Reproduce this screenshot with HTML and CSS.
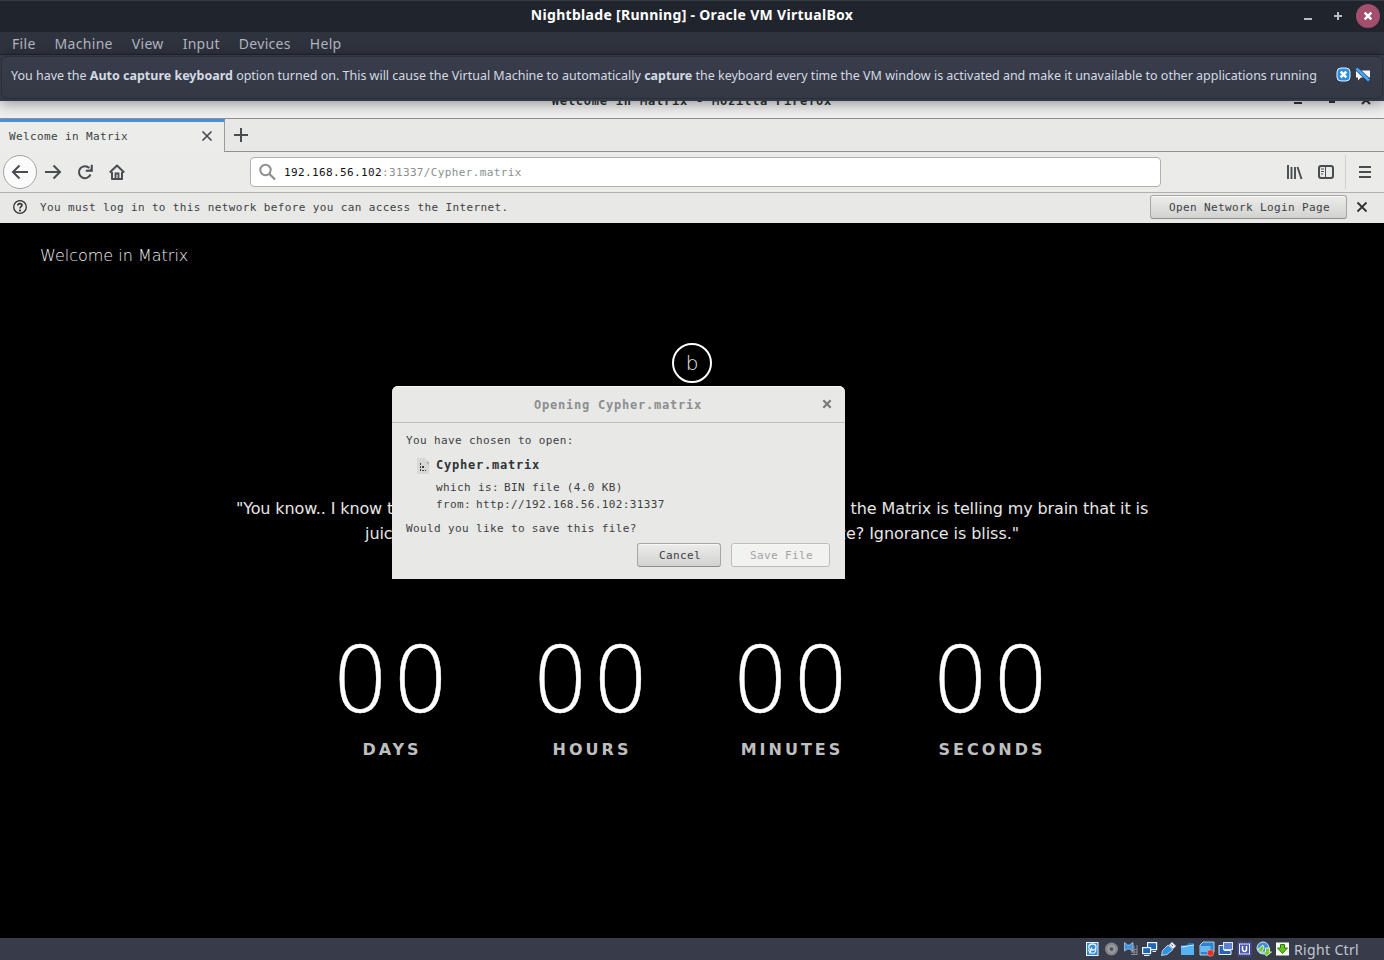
FILE: index.html
```html
<!DOCTYPE html>
<html lang="en">
<head>
<meta charset="utf-8">
<title>Nightblade [Running] - Oracle VM VirtualBox</title>
<link rel="stylesheet" href="styles.css">
</head>
<body>
<header class="vm-title">
  <h1 class="vm-name">Nightblade [Running] - Oracle VM VirtualBox</h1>
  <svg class="vm-controls" width="86" height="32" viewBox="0 0 86 32">
    <path d="M6 19h8M36 16h8M40 12v8" stroke="#b9bcc2" stroke-width="2" fill="none"/>
    <circle cx="70" cy="16" r="12" fill="#a44e6e"/>
    <path d="M66.700 12.700l6.600 6.600M73.300 12.700l-6.600 6.600" stroke="#fff" stroke-width="2.500"/>
  </svg>
</header>
<nav class="menu">
  <span>File</span><span>Machine</span><span>View</span><span>Input</span><span>Devices</span><span>Help</span>
</nav>
<section class="notice">
  <div class="notice-box">
    <p class="notice-text">You have the <b>Auto capture keyboard</b> option turned on. This will cause the Virtual Machine to automatically <b>capture</b> the keyboard every time the VM window is activated and make it unavailable to other applications running</p>
    <svg class="notice-icons" width="36" height="16" viewBox="0 0 36 16">
      <rect x="1" y="1" width="13" height="13" rx="4" fill="#2b8fe6" stroke="#e6f4ff"/>
      <path d="M4.700 4.700l5.600 5.600M10.300 4.700l-5.600 5.600" stroke="#fff" stroke-width="2.600"/>
      <path d="M20 3.500h14v7h-2v3l-3-3h-4l-3 3v-3h-2z" fill="#f5f5f5"/>
      <path d="M20.500 1.500L33 13.500" stroke="#173e6e" stroke-width="4"/>
      <path d="M20.500 1.500L33 13.500" stroke="#4aa6f2" stroke-width="2.600"/>
    </svg>
  </div>
</section>
<main class="guest">
  <div class="ff-title">
    <span class="ff-name">Welcome in Matrix - Mozilla Firefox</span>
    <svg width="84" height="17" viewBox="0 0 84 17"><path d="M4 2h8M39 1h6" stroke="#2e3436" stroke-width="2"/><path d="M72 3l4-4 4 4" stroke="#2e3436" stroke-width="2" fill="none"/></svg>
  </div>
  <div class="tabs">
    <div class="tab"><span>Welcome in Matrix</span><svg width="12" height="12" viewBox="0 0 12 12"><path d="M1.500 1.500l9 9M10.500 1.500l-9 9" stroke="#474d50" stroke-width="1.700"/></svg></div>
    <div class="tab-new"><svg width="14" height="14" viewBox="0 0 14 14"><path d="M7 0v14M0 7h14" stroke="#474d50" stroke-width="2"/></svg></div>
  </div>
  <div class="toolbar">
    <div class="back"><svg width="18" height="16" viewBox="0 0 18 16"><path d="M17 8H2M8.500 1.500L2 8l6.500 6.500" class="ico"/></svg></div>
    <svg class="fwd" width="18" height="16" viewBox="0 0 18 16"><path d="M1 8h15M9.500 1.500L16 8l-6.500 6.500" class="ico"/></svg>
    <svg class="reload" width="16" height="16" viewBox="0 0 16 16"><path d="M13.500 10.500A6 6 0 1 1 12.300 4" class="ico"/><path d="M15.500 1v6.500H9v-1.500h3.500L14 4.500V1z" fill="#474d50" stroke="#474d50" stroke-width=".6"/></svg>
    <svg class="home" width="16" height="16" viewBox="0 0 16 16"><path d="M.8 8.500L8 1.500l7.200 7M3 8v7h10V8" class="ico" stroke-linejoin="round"/><path d="M6.500 15V9.500h3V15" stroke="#474d50" stroke-width="1.800" fill="none"/></svg>
    <div class="url"><svg width="18" height="18" viewBox="0 0 18 18"><circle cx="6.500" cy="7" r="5.200" fill="none" stroke="#8c8f90" stroke-width="2"/><path d="M10.200 10.700l5.800 5.800" stroke="#8c8f90" stroke-width="2.300"/></svg><span class="url-text"><em>192.168.56.102</em>:31337/Cypher.matrix</span></div>
    <svg class="lib" width="16" height="16" viewBox="0 0 16 16"><path d="M1 1v14M4.500 3v12M8 3v12M10.500 3l4 12" stroke="#474d50" stroke-width="1.900" fill="none"/></svg>
    <svg class="side" width="16" height="14" viewBox="0 0 16 14"><rect x="1" y="1" width="14" height="12" rx="2" class="ico"/><path d="M7.500 1v12M3 4h3M3 6.500h3M3 9h2" stroke="#474d50" stroke-width="1" fill="none"/></svg>
    <div class="hamb"><svg width="12" height="12" viewBox="0 0 12 12"><path d="M0 1h12M0 6h12M0 11h12" stroke="#474d50" stroke-width="2"/></svg></div>
  </div>
  <div class="portal">
    <svg width="14" height="14" viewBox="0 0 14 14"><circle cx="7" cy="7" r="6.300" fill="none" stroke="#2e3436" stroke-width="1.300"/><path d="M4.900 5.500C4.900 3 9 3 9 5.300 9 6.700 7 6.700 7 8.500" fill="none" stroke="#2e3436" stroke-width="1.600"/><circle cx="7" cy="10.500" r="1.100" fill="#2e3436"/></svg>
    <span class="portal-text">You must log in to this network before you can access the Internet.</span>
    <button class="btn login">Open Network Login Page</button>
    <svg width="12" height="12" viewBox="0 0 12 12"><path d="M1.500 1.500l9 9M10.500 1.500l-9 9" stroke="#2e3436" stroke-width="1.800"/></svg>
  </div>
  <div class="page">
    <div class="brand">Welcome in Matrix</div>
    <div class="badge">b</div>
    <p class="quote"><span class="line-a">"You know.. I know this steak doesn't exist. I know when I put it in my mouth; the Matrix is telling my brain that it is</span><br><span class="line-b">juicy, and delicious. After nine years.. you know what I realize? Ignorance is bliss."</span></p>
    <div class="count">
      <div class="unit"><span class="num">00</span><span class="lab">DAYS</span></div>
      <div class="unit"><span class="num">00</span><span class="lab">HOURS</span></div>
      <div class="unit"><span class="num">00</span><span class="lab">MINUTES</span></div>
      <div class="unit"><span class="num">00</span><span class="lab">SECONDS</span></div>
    </div>
    <section class="dialog">
      <div class="dlg-head"><h2>Opening Cypher.matrix</h2><svg width="10" height="10" viewBox="0 0 10 10"><path d="M1.300 1.300l7.400 7.400M8.700 1.300L1.300 8.700" stroke="#777b7c" stroke-width="2.200"/></svg></div>
      <div class="dlg-body">
        <p>You have chosen to open:</p>
        <div class="file"><svg width="12" height="16" viewBox="0 0 12 16"><path d="M0 0h8l4 4v12H0z" fill="#d8d8d7"/><path d="M9 4h3v3z" fill="#a9abab"/><path d="M3 5h1v2H3zM3 8h1v2H3zM3 11h1v2H3zM5 8h2v2H5zM5 12h2v1H5zM8 12h1v1H8z" fill="#3a3f41"/></svg><b>Cypher.matrix</b></div>
        <p class="meta"><span>which is:</span><span>BIN file (4.0 KB)</span></p>
        <p class="meta"><span>from:</span><span>http://192.168.56.102:31337</span></p>
        <p class="ask">Would you like to save this file?</p>
        <div class="actions"><button class="btn cancel">Cancel</button><button class="btn save" disabled>Save File</button></div>
      </div>
    </section>
  </div>
</main>
<footer class="status">
  <svg width="206" height="16" viewBox="0 0 206 16">
    <g><rect x="1.500" y="1.500" width="11.500" height="13" fill="#2f8ad8" stroke="#e8f4ff"/><ellipse cx="7.400" cy="6" rx="3.600" ry="3" fill="none" stroke="#e8f4ff" stroke-width="1.300"/><path d="M3.500 8.500c1 5 7 5 7.500 0M7 6.500l-2.500 6" stroke="#fff" stroke-width="1.100" fill="none"/></g>
    <g><circle cx="26.500" cy="8" r="6.500" fill="#85878c"/><circle cx="26.500" cy="8" r="3.500" fill="none" stroke="#a8aaad"/><circle cx="26.500" cy="8" r="1.600" fill="#4a4d55"/></g>
    <g><path d="M39.500 1.500l3 2.500h2l3.500-2.500v9L44.500 8h-2l-3 2z" fill="#3f93de" stroke="#b8dcfa" stroke-width=".7"/><path d="M46 8.500h6M46 11h6M46 13.500h6M49 5v9M52 4v10" stroke="#8a8f98" stroke-width="1"/></g>
    <g fill="#1c66b5" stroke="#e8f4ff" stroke-width="1.200"><rect x="62.600" y="1.600" width="9" height="7"/><rect x="57.600" y="6.600" width="8" height="6"/><path d="M59 14.500h5.500M67.500 10.500h3.500"/></g>
    <g><path d="M76.500 14.500l1-5L83 4l5 4.500-6 5z" fill="#2f91e4" stroke="#d8edff" stroke-width=".8"/><path d="M84 4l3-3 4 4-3 3z" fill="#f2f2f2"/><path d="M86.500 3.500l1.500 1.500" stroke="#556"/></g>
    <g><path d="M96 4h6l1-2h6v12H96z" fill="#1d76c9"/><path d="M96 6l13-1v9H96z" fill="#55b5f4"/><path d="M96 6l13-2" stroke="#e8f6ff"/></g>
    <g><path d="M115 4l3-3h11v10l-3 3h-11z" fill="#2e83d0" stroke="#d6ebff" stroke-width=".8"/><path d="M115.500 5h10v6h-10z" fill="#67baf0"/><circle cx="125.500" cy="12" r="3.300" fill="#df2f20" stroke="#f4c1b8" stroke-width=".5"/></g>
    <g><path d="M134 4.500h5v5h7v4h-12z" fill="#2862ba" stroke="#eff6ff"/><rect x="138.500" y="1.500" width="9" height="7" fill="#5f83d2" stroke="#d8e6ff"/></g>
    <g><rect x="153" y="1.500" width="13" height="13" fill="none" stroke="#4450b0" stroke-width="2" stroke-dasharray="1 1"/><rect x="154.500" y="3" width="10" height="10" fill="#4957b8" stroke="#e6e9ff"/><path d="M157.500 5v4q2 3 4 0V5" fill="none" stroke="#fff" stroke-width="1.500"/></g>
    <g><circle cx="178" cy="7" r="6" fill="#3c8ede" stroke="#d5eaff"/><path d="M173 8l5-4 1 3-3 5zM181.500 15l-4-4h3V7h4v4h2z" fill="#78c83a" stroke="#efffdc" stroke-width=".8"/></g>
    <g><rect x="191" y="1.500" width="13" height="13" fill="#f5fbef"/><path d="M195.500 3.500h4v3.500h3l-5 5.500-5-5.500h3z" fill="#68c21d" stroke="#2f7b12"/></g>
  </svg>
  <span class="host">Right Ctrl</span>
</footer>
</body>
</html>
```
FILE: styles.css
```css
* { box-sizing: border-box; }
body { margin: 0; width: 1384px; height: 960px; overflow: hidden; background: #000; display: flex; flex-direction: column; font-family: "Noto Sans", sans-serif; }
h1, h2, p { margin: 0; }
svg { flex: none; display: block; }

.vm-title { height: 32px; background: #20242c; border-top: 1px solid #363a42; display: flex; align-items: center; padding-left: 86px; }
.vm-name { flex: 1; text-align: center; color: #fff; font-size: 14px; line-height: 28px; padding-bottom: 3px; font-weight: 700; letter-spacing: .3px; }
.vm-controls { margin-top: -1px; }
.menu { height: 23px; background: #2f333e; border-bottom: 1px solid #22252d; display: flex; gap: 19px; padding-left: 12px; color: #b2b7c1; font-size: 14px; line-height: 23px; letter-spacing: .3px; }

.notice { height: 46px; background: #353945; padding: 1px 1px; position: relative; z-index: 2; box-shadow: 0 2px 14px rgba(0, 0, 0, .42); }
.notice-box { height: 43px; border: 1px solid #2b2e39; border-radius: 6px; background: linear-gradient(#393d4b, #343844); display: flex; align-items: flex-start; padding: 9px 10px 0 9px; }
.notice-text { width: 1325px; color: #d3dae3; font-size: 12.500px; line-height: 20px; white-space: nowrap; letter-spacing: -.008px; }
.notice-icons { margin-top: 1px; }

.guest { flex: 1; display: flex; flex-direction: column; min-height: 0; font-family: "DejaVu Sans Mono", monospace; font-size: 11px; letter-spacing: .37px; color: #3c4144; }
.ff-title { height: 18px; background: #f0f0f0; border-bottom: 1px solid #8f918e; overflow: hidden; display: flex; justify-content: flex-end; align-items: flex-start; padding-right: 10px; }
.ff-name { margin-right: 458px; margin-top: -9px; line-height: 18px; font-size: 12px; font-weight: 700; color: #2e3436; letter-spacing: .78px; }
.tabs { height: 33px; display: flex; background: #e8e8e6; }
.tab { width: 225px; border-top: 3px solid #4a90d9; border-right: 1px solid #9a9c99; background: #ececea; display: flex; align-items: center; justify-content: space-between; padding: 0 11px 2px 9px; }
.tab-new { flex: 1; border-bottom: 1px solid #8f918e; padding: 9px; }
.toolbar { height: 41px; background: #ebebe9; border-bottom: 1px solid #b0b2af; display: flex; align-items: center; padding-left: 3px; }
.ico { stroke: #474d50; stroke-width: 2; fill: none; }
.back { width: 34px; height: 34px; border: 1px solid #a3a5a3; border-radius: 50%; background: #fbfbfb; display: grid; place-items: center; }
.fwd { margin-left: 7px; }
.reload { margin-left: 15px; }
.home { margin-left: 16px; }
.url { margin-left: 125px; width: 911px; height: 30px; border: 1px solid #b0b2af; border-radius: 4px; background: #fff; display: flex; align-items: center; gap: 7px; padding-left: 8px; color: #8b8e8f; }
.url em { font-style: normal; color: #101314; }
.lib { margin-left: 126px; }
.side { margin-left: 15px; }
.hamb { margin-left: 11px; border-left: 1px solid #cfd0ce; height: 34px; padding: 11px 0 0 13px; }
.portal { height: 30px; background: #e8e8e6; display: flex; align-items: center; padding: 0 16px 2px 13px; }
.portal-text { margin-left: 13px; flex: 1; }
.btn { font: inherit; letter-spacing: inherit; color: #3c4144; border: 1px solid #a5a7a4; border-bottom-color: #8c8e8b; border-radius: 3px; background: linear-gradient(#ececea, #d2d2d0); box-shadow: inset 0 1px #f8f8f8; padding: 0 0 0 2px; height: 24px; }
.login { width: 197px; margin-right: 9px; }

.page { flex: 1; position: relative; background: #000; color: #e6e6e6; font-family: "DejaVu Sans", sans-serif; font-size: 16px; letter-spacing: 0; display: flex; flex-direction: column; }
.brand { padding: 22px 40px 0; line-height: 22px; font-weight: 200; color: #eee; }
.badge { width: 40px; height: 40px; margin: 76px auto 0; border: 2px solid #fff; border-radius: 50%; display: grid; place-items: center; font-size: 20px; font-weight: 200; line-height: 36px; }
.quote { margin-top: 113px; text-align: center; line-height: 25px; white-space: nowrap; }
.line-a { letter-spacing: -.11px; }
.line-b { letter-spacing: -.063px; }
.count { display: flex; width: 800px; margin: 85px auto 0; }
.unit { width: 200px; display: flex; flex-direction: column; align-items: center; }
.num { font-size: 90px; line-height: 100px; font-weight: 200; letter-spacing: 3px; color: #fff; -webkit-text-stroke: .4px #fff; }
.lab { margin-top: 9px; line-height: 20px; font-weight: 700; letter-spacing: 3px; color: #bfbfbf; }

.dialog { position: absolute; left: 392px; top: 163px; width: 453px; height: 193px; background: #e8e8e6; border-radius: 6px 6px 0 0; color: #3c4144; font-family: "DejaVu Sans Mono", monospace; font-size: 11px; letter-spacing: .37px; }
.dlg-head { height: 37px; border-bottom: 1px solid #bfc0be; box-shadow: inset 0 1px #fafafa; border-radius: 6px 6px 0 0; display: flex; align-items: center; padding: 0 13px 0 22px; }
.dlg-head h2 { flex: 1; text-align: center; font-size: 12px; padding-top: 2px; color: #8b8e8f; letter-spacing: .78px; }
.dlg-body { padding: 9px 15px 0 14px; line-height: 17px; }
.file { display: flex; align-items: center; gap: 7px; padding-left: 11px; margin: 8px 0 5px; font-size: 12px; letter-spacing: .78px; color: #2e3436; }
.meta { padding-left: 30px; display: flex; gap: 5px; }
.ask { margin-top: 7px; }
.actions { display: flex; justify-content: flex-end; gap: 10px; margin-top: 6px; }
.cancel { width: 84px; }
.save { width: 99px; color: #a1a3a3; background: #f2f2f1; border-color: #bcbebb; }

.status { height: 22px; background: #383c4a; display: flex; align-items: center; padding-left: 1085px; color: #c2c8d2; font-size: 14px; letter-spacing: .35px; }
.host { margin-left: 3px; }
```
